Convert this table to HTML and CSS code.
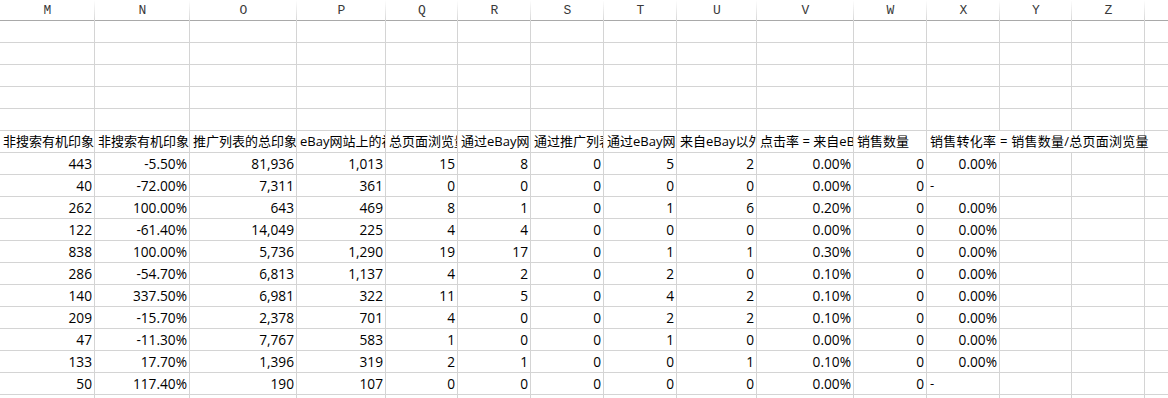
FILE: index.html
```html
<!DOCTYPE html>
<html lang="zh-CN">
<head>
<meta charset="utf-8">
<title>Sheet</title>
<link rel="stylesheet" href="styles.css">
</head>
<body>
<div class="sheet">
  <div class="row colhead">
    <div class="ch">M</div><div class="ch">N</div><div class="ch">O</div><div class="ch">P</div><div class="ch">Q</div><div class="ch">R</div><div class="ch">S</div><div class="ch">T</div><div class="ch">U</div><div class="ch">V</div><div class="ch">W</div><div class="ch">X</div><div class="ch">Y</div><div class="ch">Z</div><div class="ch last"></div>
  </div>
  <div class="row"><div class="c"></div><div class="c"></div><div class="c"></div><div class="c"></div><div class="c"></div><div class="c"></div><div class="c"></div><div class="c"></div><div class="c"></div><div class="c"></div><div class="c"></div><div class="c"></div><div class="c"></div><div class="c"></div><div class="c last"></div></div>
  <div class="row"><div class="c"></div><div class="c"></div><div class="c"></div><div class="c"></div><div class="c"></div><div class="c"></div><div class="c"></div><div class="c"></div><div class="c"></div><div class="c"></div><div class="c"></div><div class="c"></div><div class="c"></div><div class="c"></div><div class="c last"></div></div>
  <div class="row"><div class="c"></div><div class="c"></div><div class="c"></div><div class="c"></div><div class="c"></div><div class="c"></div><div class="c"></div><div class="c"></div><div class="c"></div><div class="c"></div><div class="c"></div><div class="c"></div><div class="c"></div><div class="c"></div><div class="c last"></div></div>
  <div class="row"><div class="c"></div><div class="c"></div><div class="c"></div><div class="c"></div><div class="c"></div><div class="c"></div><div class="c"></div><div class="c"></div><div class="c"></div><div class="c"></div><div class="c"></div><div class="c"></div><div class="c"></div><div class="c"></div><div class="c last"></div></div>
  <div class="row"><div class="c"></div><div class="c"></div><div class="c"></div><div class="c"></div><div class="c"></div><div class="c"></div><div class="c"></div><div class="c"></div><div class="c"></div><div class="c"></div><div class="c"></div><div class="c"></div><div class="c"></div><div class="c"></div><div class="c last"></div></div>
  <div class="row thead">
    <div class="c t">非搜索有机印象</div>
    <div class="c t">非搜索有机印象变化率</div>
    <div class="c t">推广列表的总印象</div>
    <div class="c t">eBay网站上的初始印象</div>
    <div class="c t">总页面浏览量</div>
    <div class="c t">通过eBay网站的页面浏览量</div>
    <div class="c t">通过推广列表的页面浏览量</div>
    <div class="c t">通过eBay网站推广的浏览量</div>
    <div class="c t">来自eBay以外的页面浏览量</div>
    <div class="c t">点击率 = 来自eBay以外的页面浏览量/推广列表印象</div>
    <div class="c t">销售数量</div>
    <div class="c t over">销售转化率 = 销售数量/总页面浏览量</div>
    <div class="c nob"></div>
    <div class="c"></div>
    <div class="c last"></div>
  </div>
  <div class="row"><div class="c n">443</div><div class="c n">-5.50%</div><div class="c n">81,936</div><div class="c n">1,013</div><div class="c n">15</div><div class="c n">8</div><div class="c n">0</div><div class="c n">5</div><div class="c n">2</div><div class="c n">0.00%</div><div class="c n">0</div><div class="c n">0.00%</div><div class="c"></div><div class="c"></div><div class="c last"></div></div>
  <div class="row"><div class="c n">40</div><div class="c n">-72.00%</div><div class="c n">7,311</div><div class="c n">361</div><div class="c n">0</div><div class="c n">0</div><div class="c n">0</div><div class="c n">0</div><div class="c n">0</div><div class="c n">0.00%</div><div class="c n">0</div><div class="c t">-</div><div class="c"></div><div class="c"></div><div class="c last"></div></div>
  <div class="row"><div class="c n">262</div><div class="c n">100.00%</div><div class="c n">643</div><div class="c n">469</div><div class="c n">8</div><div class="c n">1</div><div class="c n">0</div><div class="c n">1</div><div class="c n">6</div><div class="c n">0.20%</div><div class="c n">0</div><div class="c n">0.00%</div><div class="c"></div><div class="c"></div><div class="c last"></div></div>
  <div class="row"><div class="c n">122</div><div class="c n">-61.40%</div><div class="c n">14,049</div><div class="c n">225</div><div class="c n">4</div><div class="c n">4</div><div class="c n">0</div><div class="c n">0</div><div class="c n">0</div><div class="c n">0.00%</div><div class="c n">0</div><div class="c n">0.00%</div><div class="c"></div><div class="c"></div><div class="c last"></div></div>
  <div class="row"><div class="c n">838</div><div class="c n">100.00%</div><div class="c n">5,736</div><div class="c n">1,290</div><div class="c n">19</div><div class="c n">17</div><div class="c n">0</div><div class="c n">1</div><div class="c n">1</div><div class="c n">0.30%</div><div class="c n">0</div><div class="c n">0.00%</div><div class="c"></div><div class="c"></div><div class="c last"></div></div>
  <div class="row"><div class="c n">286</div><div class="c n">-54.70%</div><div class="c n">6,813</div><div class="c n">1,137</div><div class="c n">4</div><div class="c n">2</div><div class="c n">0</div><div class="c n">2</div><div class="c n">0</div><div class="c n">0.10%</div><div class="c n">0</div><div class="c n">0.00%</div><div class="c"></div><div class="c"></div><div class="c last"></div></div>
  <div class="row"><div class="c n">140</div><div class="c n">337.50%</div><div class="c n">6,981</div><div class="c n">322</div><div class="c n">11</div><div class="c n">5</div><div class="c n">0</div><div class="c n">4</div><div class="c n">2</div><div class="c n">0.10%</div><div class="c n">0</div><div class="c n">0.00%</div><div class="c"></div><div class="c"></div><div class="c last"></div></div>
  <div class="row"><div class="c n">209</div><div class="c n">-15.70%</div><div class="c n">2,378</div><div class="c n">701</div><div class="c n">4</div><div class="c n">0</div><div class="c n">0</div><div class="c n">2</div><div class="c n">2</div><div class="c n">0.10%</div><div class="c n">0</div><div class="c n">0.00%</div><div class="c"></div><div class="c"></div><div class="c last"></div></div>
  <div class="row"><div class="c n">47</div><div class="c n">-11.30%</div><div class="c n">7,767</div><div class="c n">583</div><div class="c n">1</div><div class="c n">0</div><div class="c n">0</div><div class="c n">1</div><div class="c n">0</div><div class="c n">0.00%</div><div class="c n">0</div><div class="c n">0.00%</div><div class="c"></div><div class="c"></div><div class="c last"></div></div>
  <div class="row"><div class="c n">133</div><div class="c n">17.70%</div><div class="c n">1,396</div><div class="c n">319</div><div class="c n">2</div><div class="c n">1</div><div class="c n">0</div><div class="c n">0</div><div class="c n">1</div><div class="c n">0.10%</div><div class="c n">0</div><div class="c n">0.00%</div><div class="c"></div><div class="c"></div><div class="c last"></div></div>
  <div class="row"><div class="c n">50</div><div class="c n">117.40%</div><div class="c n">190</div><div class="c n">107</div><div class="c n">0</div><div class="c n">0</div><div class="c n">0</div><div class="c n">0</div><div class="c n">0</div><div class="c n">0.00%</div><div class="c n">0</div><div class="c t">-</div><div class="c"></div><div class="c"></div><div class="c last"></div></div>
  <div class="row"><div class="c"></div><div class="c"></div><div class="c"></div><div class="c"></div><div class="c"></div><div class="c"></div><div class="c"></div><div class="c"></div><div class="c"></div><div class="c"></div><div class="c"></div><div class="c"></div><div class="c"></div><div class="c"></div><div class="c last"></div></div>
</div>
</body>
</html>
```

FILE: styles.css
```css
html, body {
  margin: 0;
  padding: 0;
  background: #ffffff;
}

.sheet {
  width: 1168px;
  height: 398px;
  overflow: hidden;
  font-family: "Open Sans", "Noto Sans CJK SC", sans-serif;
  font-size: 13px;
  color: #000;
}

.row {
  display: grid;
  grid-template-columns: 95px 95px 107px 89px 72px 73px 73px 73px 80px 97px 73px 73px 72px 73px 1fr;
  height: 22px;
  box-sizing: border-box;
  border-bottom: 1px solid #d4d4d4;
}

.colhead {
  height: 21px;
  border-bottom: 1px solid #a9a9a9;
}

.ch {
  font-family: "Liberation Mono", monospace;
  font-size: 13px;
  color: #3a3a3a;
  text-align: center;
  line-height: 21px;
  background: linear-gradient(to bottom, #ffffff, #d6d6d6) right top / 1px 100% no-repeat;
}

.ch.last {
  background: none;
}

.c {
  box-sizing: border-box;
  border-right: 1px solid #d4d4d4;
  line-height: 21px;
  white-space: nowrap;
  overflow: hidden;
}

.c.last {
  border-right: none;
}

.t {
  padding-left: 3px;
  text-align: left;
}

.n {
  padding-right: 2px;
  text-align: right;
  font-size: 13.7px;
}

.thead .over {
  overflow: visible;
  border-right: none;
  position: relative;
  z-index: 1;
  letter-spacing: 0.25px;
}

.thead .nob {
  border-right: none;
}
```
